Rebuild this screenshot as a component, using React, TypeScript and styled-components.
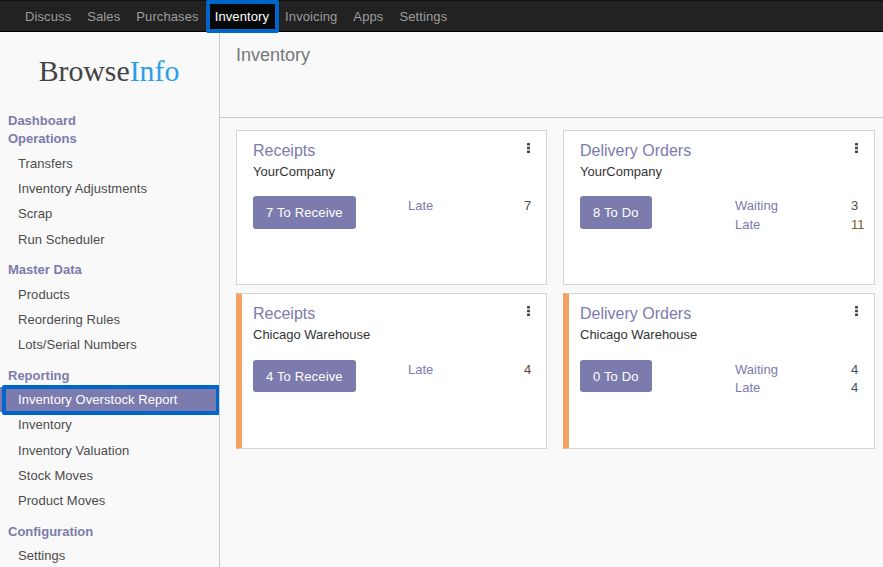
import React from 'react';
import styled, { createGlobalStyle } from 'styled-components';

const PRIMARY = '#7c7bad';
const TEXT = '#4c4c4c';

const GlobalStyle = createGlobalStyle`
  html, body {
    margin: 0;
    padding: 0;
    height: 100%;
    overflow: hidden;
  }
  #root {
    height: 100%;
  }
  * {
    box-sizing: border-box;
  }
`;

const AppContainer = styled.div`
  height: 567px;
  display: flex;
  flex-direction: column;
  font-family: "Liberation Sans", Arial, sans-serif;
  font-size: 13px;
  color: ${TEXT};
  background: #f9f9f9;
  overflow: hidden;
`;

const TopBar = styled.nav`
  flex: 0 0 32px;
  display: flex;
  align-items: stretch;
  padding-left: 17px;
  background: #222222;
  border-top: 1px solid #111;
  border-bottom: 1px solid #000;
`;

const TopLink = styled.a<{ $active?: boolean }>`
  position: relative;
  display: flex;
  align-items: center;
  padding: 0 8px;
  letter-spacing: 0.105px;
  color: ${(p) => (p.$active ? '#ffffff' : '#9d9d9d')};
  background: ${(p) => (p.$active ? '#080808' : 'transparent')};
  ${(p) =>
    p.$active &&
    `
    &::after {
      content: '';
      position: absolute;
      inset: -1px -2px -2px -1px;
      border: 4px solid #0066cc;
      border-radius: 2px;
    }
  `}
`;

const Body = styled.div`
  flex: 1;
  display: flex;
  min-height: 0;
`;

const Sidebar = styled.aside`
  flex: 0 0 220px;
  background: #f9f9f9;
  border-right: 1px solid #c9c9c9;
  overflow: hidden;
`;

const Logo = styled.div`
  height: 80.45px;
  padding: 20px 1px 0 0;
  text-align: center;
  font-family: "Liberation Serif", "Times New Roman", serif;
  font-size: 29.8px;
  line-height: 38px;
  color: #444444;
`;

const LogoAccent = styled.span`
  color: #2a9fe8;
`;

const SectionTitle = styled.div<{ $tight?: boolean }>`
  height: 18px;
  margin-top: ${(p) => (p.$tight ? '0' : '9.45px')};
  padding-left: 8px;
  font-weight: bold;
  line-height: 18px;
  color: ${PRIMARY};
`;

const SideList = styled.div`
  padding-top: 2.5px;
`;

const SideItem = styled.a<{ $active?: boolean }>`
  position: relative;
  display: block;
  height: 25.2px;
  padding-left: 18px;
  line-height: 25px;
  letter-spacing: 0.05px;
  color: ${(p) => (p.$active ? '#ffffff' : TEXT)};
  background: ${(p) => (p.$active ? PRIMARY : 'transparent')};
  ${(p) =>
    p.$active &&
    `
    &::after {
      content: '';
      position: absolute;
      inset: -2px -1px -3px 2px;
      border: 4px solid #0066cc;
      border-radius: 2px;
    }
  `}
`;

const Main = styled.main`
  flex: 1;
  min-width: 0;
`;

const ControlPanel = styled.header`
  height: 86px;
  padding: 10px 16px;
  border-bottom: 1px solid #c9c9c9;
  font-size: 18px;
  line-height: 26px;
  color: #777777;
`;

const CardGrid = styled.div`
  display: grid;
  grid-template-columns: 311px 312px;
  grid-auto-rows: 155.4px;
  column-gap: 16px;
  row-gap: 8px;
  padding: 12px 0 0 16px;
`;

const Card = styled.section<{ $flagged?: boolean }>`
  position: relative;
  padding: 10px 15px 0 ${(p) => (p.$flagged ? '11px' : '16px')};
  background: #ffffff;
  border: 1px solid #d5d5d5;
  border-left: ${(p) => (p.$flagged ? '6px solid #f4a460' : '1px solid #d5d5d5')};
`;

const CardTitle = styled.div`
  font-size: 16px;
  line-height: 20px;
  color: ${PRIMARY};
`;

const CardCompany = styled.div`
  margin-top: 2px;
  line-height: 18px;
  color: #333333;
`;

const CardMenu = styled.svg`
  position: absolute;
  top: 12px;
  right: 16px;
`;

const CardBody = styled.div`
  display: grid;
  grid-template-columns: 155px 116px auto;
  align-items: start;
  margin-top: 15.4px;
`;

const ActionButton = styled.button`
  justify-self: start;
  height: 32.6px;
  padding: 0 13px;
  border: 0;
  border-radius: 3px;
  font: inherit;
  letter-spacing: 0.15px;
  color: #ffffff;
  background: ${PRIMARY};
`;

const Stats = styled.div`
  grid-column: 2 / 4;
  display: grid;
  grid-template-columns: subgrid;
  grid-auto-rows: 18.6px;
  line-height: 19px;
`;

const StatLabel = styled.span`
  color: ${PRIMARY};
`;

const StatValue = styled.span<{ $color?: string }>`
  color: ${(p) => p.$color || TEXT};
`;

const topLinks = ['Discuss', 'Sales', 'Purchases', 'Inventory', 'Invoicing', 'Apps', 'Settings'];

const sideMenu = [
  { title: 'Dashboard', items: [], tight: true },
  { title: 'Operations', items: ['Transfers', 'Inventory Adjustments', 'Scrap', 'Run Scheduler'], tight: true },
  { title: 'Master Data', items: ['Products', 'Reordering Rules', 'Lots/Serial Numbers'], tight: false },
  {
    title: 'Reporting',
    items: ['Inventory Overstock Report', 'Inventory', 'Inventory Valuation', 'Stock Moves', 'Product Moves'],
    tight: false,
  },
  { title: 'Configuration', items: ['Settings'], tight: false },
];

interface Stat {
  label: string;
  value: number;
  color?: string;
}

const cards: { title: string; company: string; action: string; flagged?: boolean; stats: Stat[] }[] = [
  {
    title: 'Receipts',
    company: 'YourCompany',
    action: '7 To Receive',
    stats: [{ label: 'Late', value: 7 }],
  },
  {
    title: 'Delivery Orders',
    company: 'YourCompany',
    action: '8 To Do',
    stats: [
      { label: 'Waiting', value: 3 },
      { label: 'Late', value: 11, color: '#7a6030' },
    ],
  },
  {
    title: 'Receipts',
    company: 'Chicago Warehouse',
    action: '4 To Receive',
    flagged: true,
    stats: [{ label: 'Late', value: 4, color: '#6e3c30' }],
  },
  {
    title: 'Delivery Orders',
    company: 'Chicago Warehouse',
    action: '0 To Do',
    flagged: true,
    stats: [
      { label: 'Waiting', value: 4, color: '#3b5068' },
      { label: 'Late', value: 4, color: '#3b5068' },
    ],
  },
];

const App = () => (
  <AppContainer>
    <GlobalStyle />
    <TopBar>
      {topLinks.map((link) => (
        <TopLink key={link} $active={link === 'Inventory'}>
          {link}
        </TopLink>
      ))}
    </TopBar>
    <Body>
      <Sidebar>
        <Logo>
          Browse<LogoAccent>Info</LogoAccent>
        </Logo>
        {sideMenu.map((section) => (
          <div key={section.title}>
            <SectionTitle $tight={section.tight}>{section.title}</SectionTitle>
            {section.items.length > 0 && (
              <SideList>
                {section.items.map((item) => (
                  <SideItem key={item} $active={item === 'Inventory Overstock Report'}>
                    {item}
                  </SideItem>
                ))}
              </SideList>
            )}
          </div>
        ))}
      </Sidebar>
      <Main>
        <ControlPanel>Inventory</ControlPanel>
        <CardGrid>
          {cards.map((card) => (
            <Card key={card.title + card.company} $flagged={card.flagged}>
              <CardTitle>{card.title}</CardTitle>
              <CardCompany>{card.company}</CardCompany>
              <CardMenu width="3" height="10" viewBox="0 0 3 10">
                <rect x="0" y="0" width="3" height="2.6" rx="0.5" fill="#444" />
                <rect x="0" y="3.7" width="3" height="2.6" rx="0.5" fill="#444" />
                <rect x="0" y="7.4" width="3" height="2.6" rx="0.5" fill="#444" />
              </CardMenu>
              <CardBody>
                <ActionButton>{card.action}</ActionButton>
                <Stats>
                  {card.stats.map((stat) => (
                    <React.Fragment key={stat.label}>
                      <StatLabel>{stat.label}</StatLabel>
                      <StatValue $color={stat.color}>{stat.value}</StatValue>
                    </React.Fragment>
                  ))}
                </Stats>
              </CardBody>
            </Card>
          ))}
        </CardGrid>
      </Main>
    </Body>
  </AppContainer>
);

export default App;
